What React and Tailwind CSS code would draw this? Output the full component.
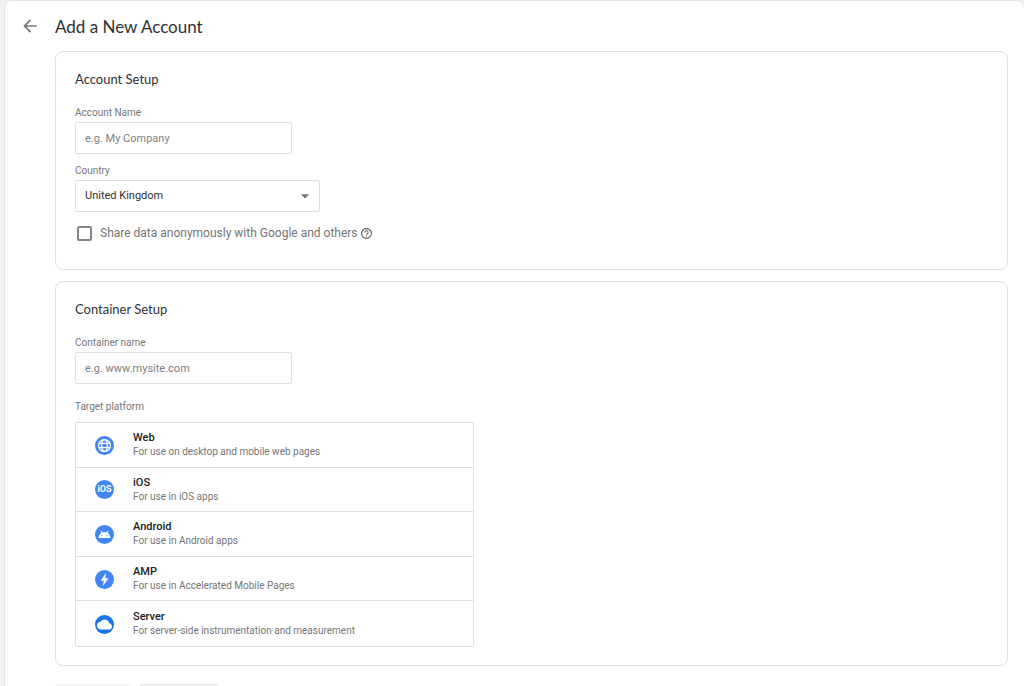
import { MdArrowBack, MdArrowDropDown, MdCloud, MdHelpOutline } from "react-icons/md";

function GlobeIcon() {
  return (
    <svg viewBox="0 0 20 20" className="size-[19px]" fill="none" stroke="currentColor" strokeWidth="1.4" aria-hidden="true">
      <circle cx="10" cy="10" r="6.2" />
      <ellipse cx="10" cy="10" rx="2.9" ry="6.2" />
      <path d="M4.4 7.8h11.2M4.4 12.2h11.2" />
    </svg>
  );
}

const platforms = [
  {
    id: "web",
    name: "Web",
    description: "For use on desktop and mobile web pages",
    color: "bg-[#4285f4]",
    icon: <GlobeIcon />,
  },
  {
    id: "ios",
    name: "iOS",
    description: "For use in iOS apps",
    color: "bg-[#4285f4]",
    icon: <span className="text-[9px] leading-none font-bold">iOS</span>,
  },
  {
    id: "android",
    name: "Android",
    description: "For use in Android apps",
    color: "bg-[#4285f4]",
    icon: (
      <svg viewBox="0 0 20 20" className="size-[19px]" aria-hidden="true">
        <path d="M6.2 6.2 7.6 8.6M13.8 6.2 12.4 8.6" stroke="currentColor" strokeWidth="1.1" />
        <path d="M3.7 13.6a6.3 6.3 0 0 1 12.6 0z" fill="currentColor" />
        <circle cx="7.3" cy="11.1" r="0.7" fill="#4285f4" />
        <circle cx="12.7" cy="11.1" r="0.7" fill="#4285f4" />
      </svg>
    ),
  },
  {
    id: "amp",
    name: "AMP",
    description: "For use in Accelerated Mobile Pages",
    color: "bg-[#4285f4]",
    icon: (
      <svg viewBox="0 0 20 20" className="size-[19px]" fill="currentColor" aria-hidden="true">
        <path d="M11.6 3 5.9 11.4h3.2L8.4 17l5.7-8.4h-3.3z" />
      </svg>
    ),
  },
  {
    id: "server",
    name: "Server",
    description: "For server-side instrumentation and measurement",
    color: "bg-[#1a73e8]",
    icon: <MdCloud className="size-[15px]" aria-hidden="true" />,
  },
];

function Card({ title, className, children }) {
  return (
    <section className={`rounded-lg border border-[#e0e1e3] px-[19px] pt-[17px] ${className}`}>
      <h2 className="mb-[13px] font-['Lato',sans-serif] text-[13px] leading-5 text-[#303134]">{title}</h2>
      {children}
    </section>
  );
}

function TextField({ id, label, placeholder }) {
  return (
    <div className="flex flex-col items-start">
      <label htmlFor={id} className="pt-[2px] text-[10px] leading-[18px] text-[#757575]">
        {label}
      </label>
      <input
        id={id}
        type="text"
        placeholder={placeholder}
        className="h-8 w-[217px] rounded-xs border border-[#e0e0e0] px-[9px] text-[11px] outline-none placeholder:text-[#808080] focus:border-[#1a73e8]"
      />
    </div>
  );
}

export default function App() {
  return (
    <div className="h-screen overflow-hidden bg-[#f1f3f4] pl-1 font-['Roboto',sans-serif] text-[#3c4043]">
      <main className="min-h-full rounded-lg border border-r-0 border-[#e2e2e8] bg-white pr-4 pb-6">
        <header className="flex h-[50px] items-center pl-[15px]">
          <button type="button" aria-label="Back" className="mr-[15px] grid size-5 place-items-center text-[#757575]">
            <MdArrowBack className="size-5" />
          </button>
          <h1 className="pt-[2px] font-['Lato',sans-serif] text-[17px] leading-6 text-[#303134]">Add a New Account</h1>
        </header>

        <form className="pl-[50px]">
          <Card title="Account Setup" className="pb-[26px]">
            <TextField id="account-name" label="Account Name" placeholder="e.g. My Company" />
            <div className="mt-[6px] flex flex-col items-start">
              <label htmlFor="country" className="pt-[2px] text-[10px] leading-[18px] text-[#757575]">
                Country
              </label>
              <div className="grid w-[245px] items-center">
                <select
                  id="country"
                  className="col-start-1 row-start-1 h-8 w-full appearance-none rounded-xs border border-[#e0e0e0] bg-white px-[9px] text-[11px] text-[#303030] outline-none"
                >
                  <option>United Kingdom</option>
                  <option>United States</option>
                </select>
                <MdArrowDropDown
                  className="pointer-events-none col-start-1 row-start-1 mr-[5px] size-5 justify-self-end text-[#757575]"
                  aria-hidden="true"
                />
              </div>
            </div>
            <div className="mt-[11px] flex h-5 items-center pl-[2px]">
              <input
                id="share"
                type="checkbox"
                className="size-[15px] appearance-none rounded-xs border-2 border-[#80868b] checked:bg-[#1a73e8]"
              />
              <label htmlFor="share" className="pl-2 text-xs text-[#757575]">
                Share data anonymously with Google and others
              </label>
              <button type="button" aria-label="Help" className="ml-[2px] text-[#616161]">
                <MdHelpOutline className="size-[13px]" />
              </button>
            </div>
          </Card>

          <Card title="Container Setup" className="mt-[11px] pb-[18px]">
            <TextField id="container-name" label="Container name" placeholder="e.g. www.mysite.com" />
            <fieldset className="mt-3">
              <legend className="pt-[2px] text-[10px] leading-[18px] text-[#757575]">Target platform</legend>
              <div className="mt-[6px] grid h-[225px] w-[399px] grid-rows-5 divide-y divide-[#e0e0e0] rounded-xs border border-[#e0e0e0]">
                {platforms.map((platform) => (
                  <label key={platform.id} className="flex cursor-pointer items-center pt-px pl-[19px]">
                    <input type="radio" name="platform" value={platform.id} className="sr-only" />
                    <span className={`grid size-[19px] place-items-center rounded-full text-white ${platform.color}`}>
                      {platform.icon}
                    </span>
                    <span className="flex flex-col pl-[19px]">
                      <span className="text-[11px] leading-[14px] font-medium text-[#212121]">{platform.name}</span>
                      <span className="text-[10px] leading-[14px] text-[#757575]">{platform.description}</span>
                    </span>
                  </label>
                ))}
              </div>
            </fieldset>
          </Card>

          <div className="mt-[18px] flex gap-2">
            <button type="button" disabled aria-label="Create" className="h-9 w-[77px] rounded-xs bg-[#f5f5f5]" />
            <button type="button" aria-label="Cancel" className="h-9 w-[78px] rounded-xs border border-[#e0e0e0] bg-[#f8f8f8]" />
          </div>
        </form>
      </main>
    </div>
  );
}
